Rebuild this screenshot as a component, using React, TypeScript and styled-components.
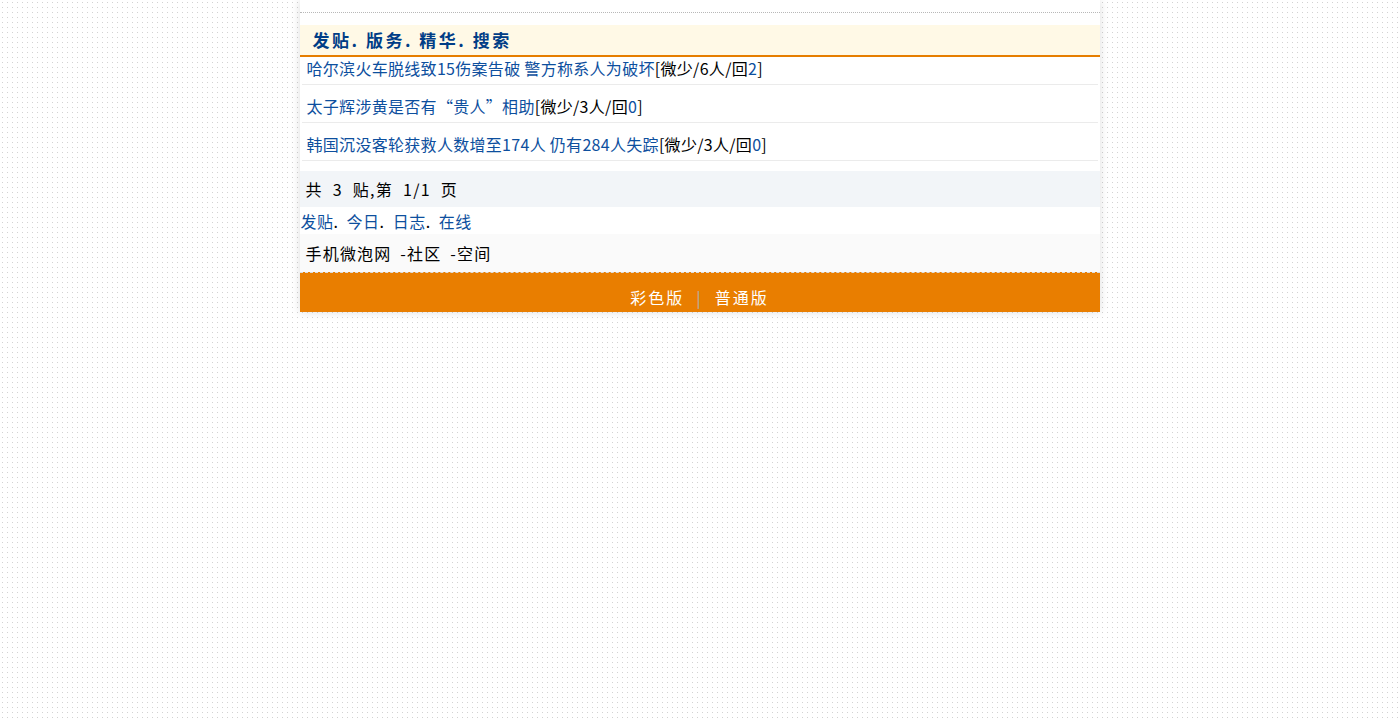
import React from 'react'
import styled, { createGlobalStyle } from 'styled-components'

const GlobalStyle = createGlobalStyle`
  html, body {
    margin: 0;
    padding: 0;
  }
  body {
    min-height: 100vh;
    background-color: #fff;
    background-image: radial-gradient(circle at 2.5px 2.5px, #d2d2d2 0.6px, transparent 0.9px);
    background-size: 5px 5px;
    font-family: 'Noto Sans CJK SC', 'Liberation Sans', sans-serif;
    font-size: 16px;
  }
`

const Page = styled.div`
  width: 800px;
  margin: 0 auto;
  background: #fff;
  box-shadow: 0 0 9px rgba(0, 0, 0, 0.13);
`

const TopRule = styled.div`
  height: 12px;
  border-bottom: 1px dotted #b8b8b8;
  margin-bottom: 12px;
`

const Header = styled.div`
  height: 32px;
  box-sizing: border-box;
  display: flex;
  align-items: center;
  padding: 0 0 1px 13px;
  background: #fff9e6;
  border-bottom: 2px solid #e67e00;
  font-size: 17px;
  font-weight: bold;
  letter-spacing: 2.5px;
  color: #003d86;
`

const Link = styled.a`
  color: #0d4f9e;
  text-decoration: none;
`

const List = styled.div`
  margin-bottom: 10px;
`

const Row = styled.div<{ $first?: boolean }>`
  margin: 0 2px;
  padding: ${(p) => (p.$first ? '0' : '10px')} 5px 5px;
  line-height: 22px;
  border-bottom: 1px solid #ebebeb;
  color: #000;
  white-space: nowrap;
  letter-spacing: 0.3px;
`

const Bar = styled.div<{ $bg: string; $h: number; $pad?: number }>`
  height: ${(p) => p.$h}px;
  display: flex;
  align-items: center;
  padding-left: ${(p) => (p.$pad ?? 6)}px;
  background: ${(p) => p.$bg};
  color: #000;
`

const Spaced = styled.span<{ $ls: number; $ws: number }>`
  letter-spacing: ${(p) => p.$ls}px;
  word-spacing: ${(p) => p.$ws}px;
  white-space: pre;
`

const Footer = styled.div`
  height: 40px;
  border-top: 1px dashed #dcdcdc;
  background: #e97e00;
  display: flex;
  justify-content: center;
  align-items: flex-end;
  padding-bottom: 3px;
  box-sizing: border-box;
  color: #fff;
  gap: 12px;
  letter-spacing: 2px;
`

const Sep = styled.span`
  color: #b0b0b0;
`

const posts = [
  { title: '哈尔滨火车脱线致15伤案告破 警方称系人为破坏', readers: 6, replies: 2 },
  { title: '太子辉涉黄是否有“贵人”相助', readers: 3, replies: 0 },
  { title: '韩国沉没客轮获救人数增至174人 仍有284人失踪', readers: 3, replies: 0 },
]

const navLinks = ['发贴', '今日', '日志', '在线']

export default function App() {
  return (
    <>
      <GlobalStyle />
      <Page>
        <TopRule />
        <Header>发贴. 版务. 精华. 搜索</Header>
        <List>
          {posts.map((p, i) => (
            <Row key={i} $first={i === 0}>
              <Link href="#">{p.title}</Link>[微少/{p.readers}人/回<Link href="#">{p.replies}</Link>]
            </Row>
          ))}
        </List>
        <Bar $bg="#f2f5f8" $h={36}>
          <Spaced $ls={1.3} $ws={5}>共 3 贴,第 1/1 页</Spaced>
        </Bar>
        <Bar $bg="#fff" $h={27} $pad={1}>
          <Spaced $ls={0.5} $ws={4}>
            {navLinks.map((n, i) => (
              <React.Fragment key={n}>
                <Link href="#">{n}</Link>
                {i < navLinks.length - 1 ? '. ' : ''}
              </React.Fragment>
            ))}
          </Spaced>
        </Bar>
        <Bar $bg="#fafafa" $h={38}>
          <Spaced $ls={1.2} $ws={4}>手机微泡网 -社区 -空间</Spaced>
        </Bar>
        <Footer>
          <span>彩色版</span>
          <Sep>|</Sep>
          <span>普通版</span>
        </Footer>
      </Page>
    </>
  )
}
